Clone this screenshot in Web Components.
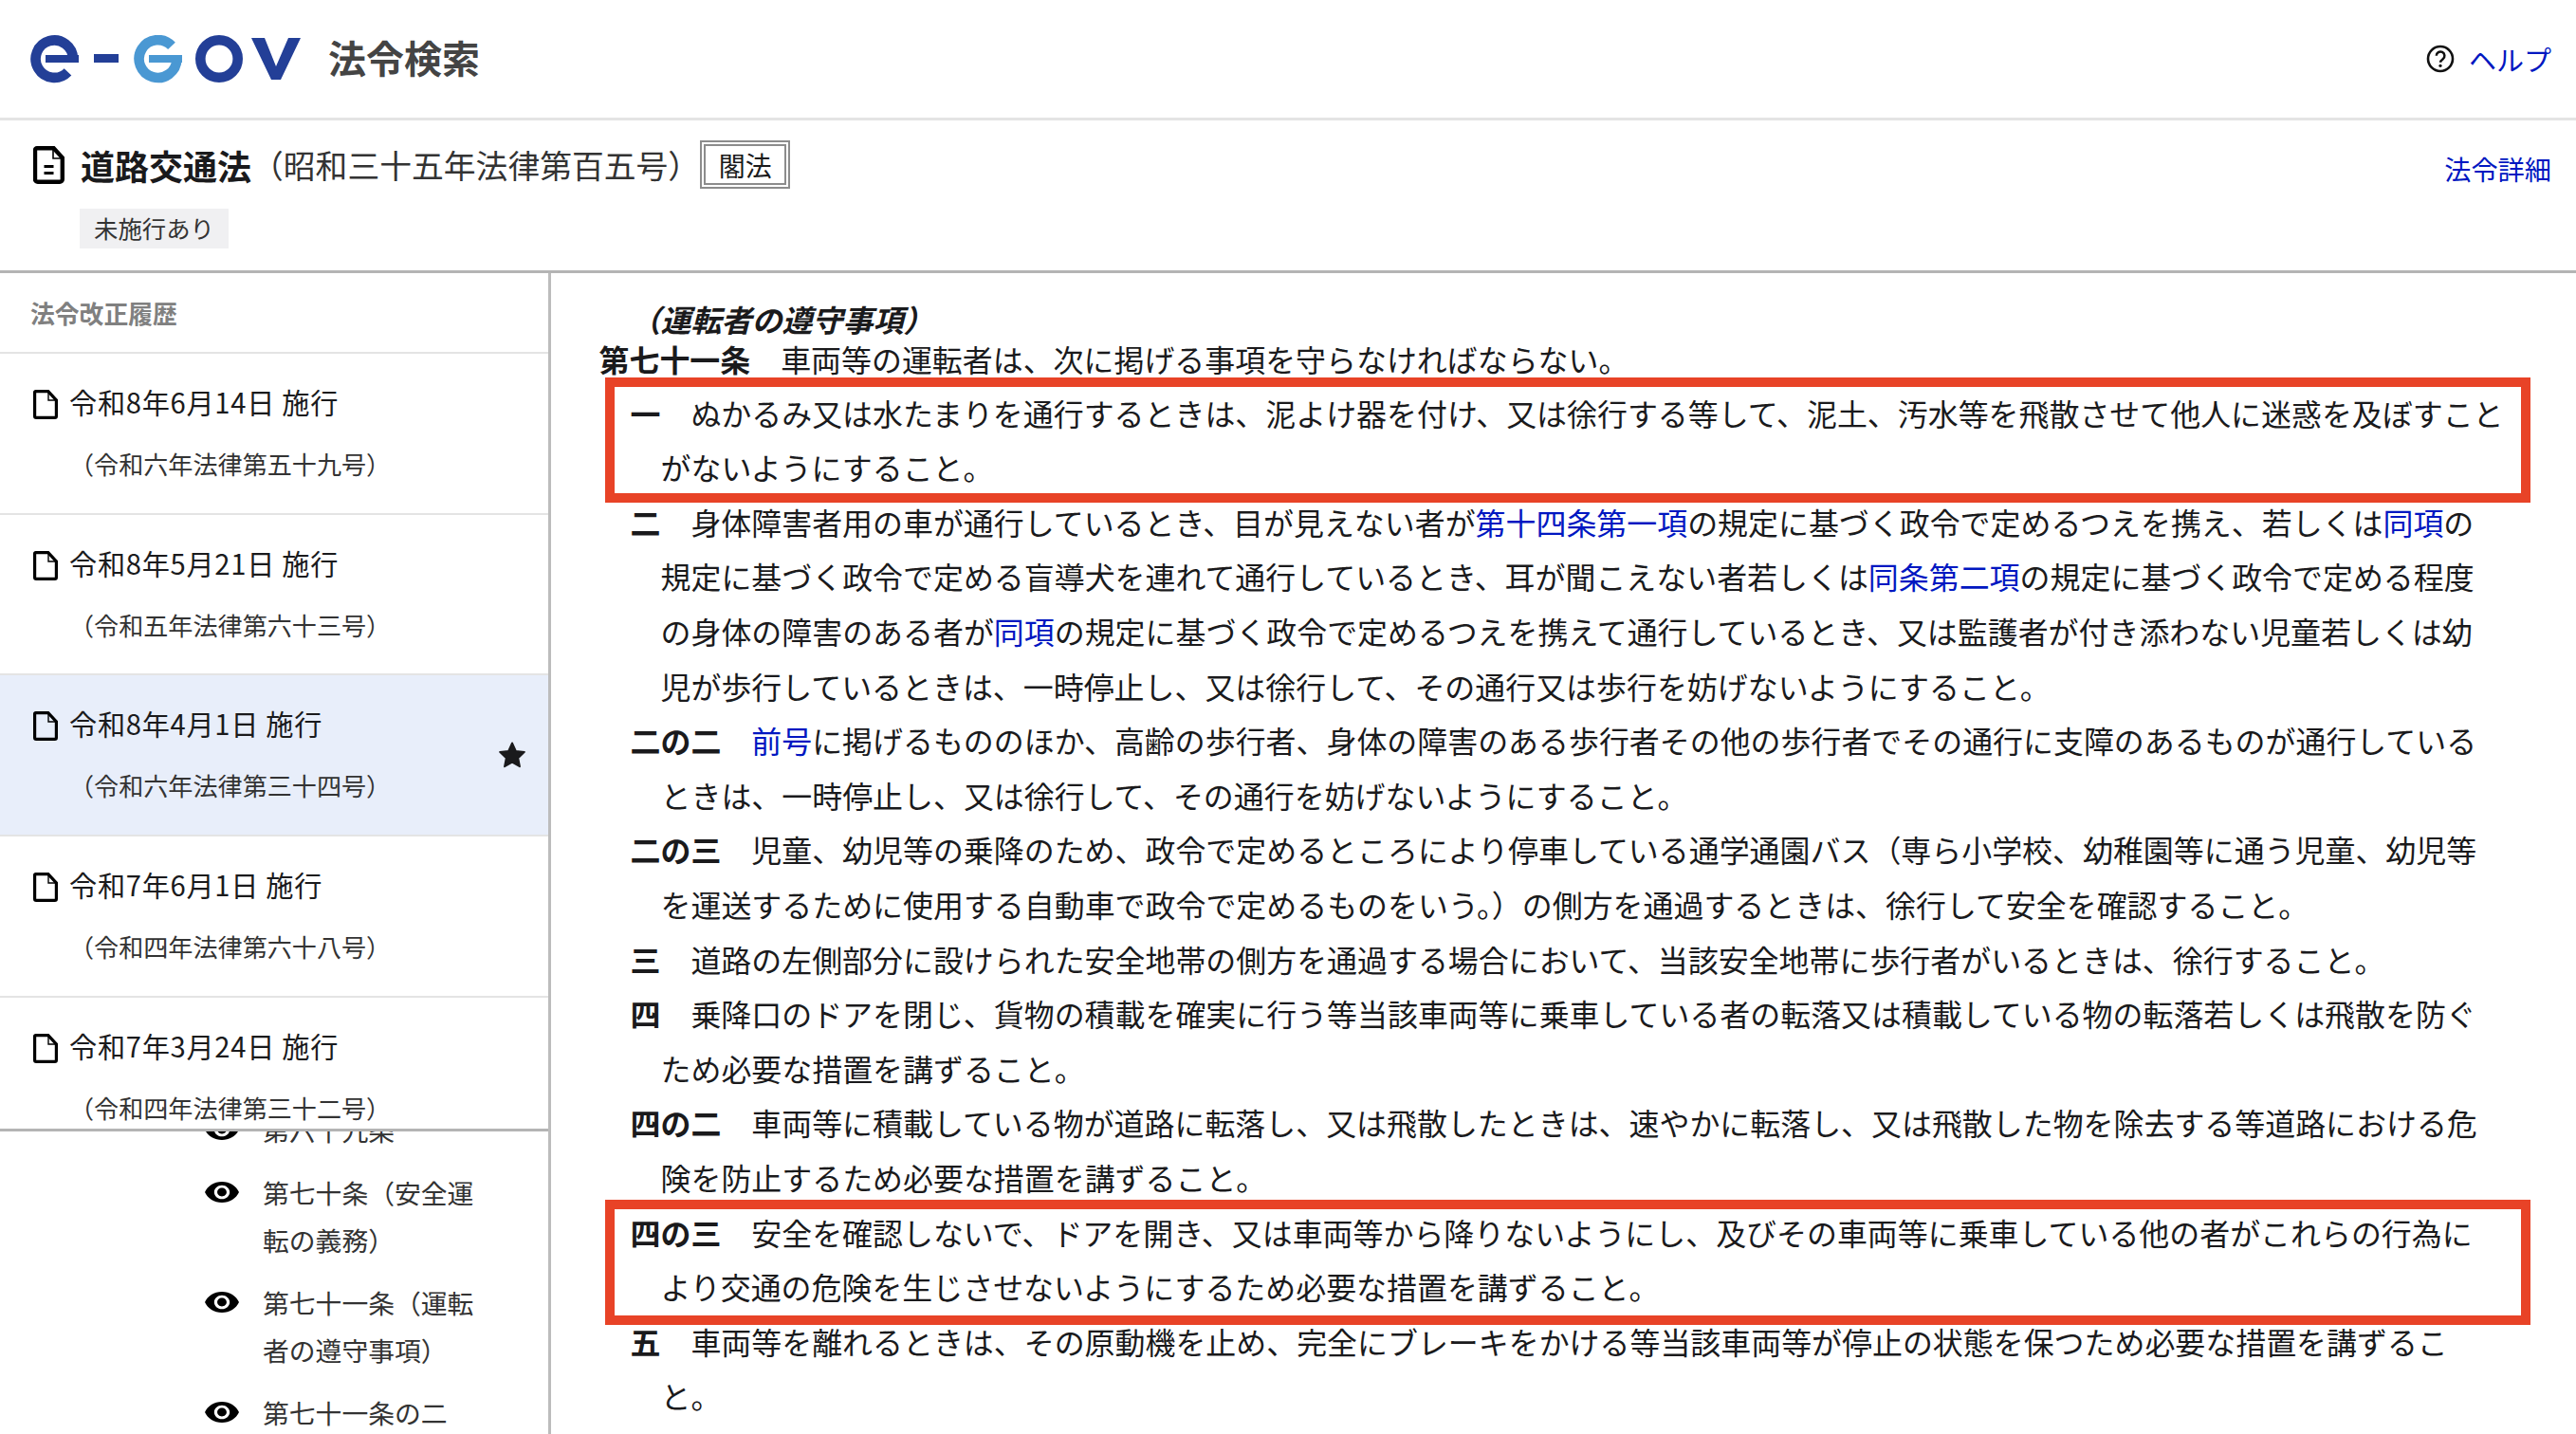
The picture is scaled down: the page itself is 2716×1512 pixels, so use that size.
<!DOCTYPE html>
<html lang="ja">
<head>
<meta charset="utf-8">
<title>道路交通法</title>
<style>
    html, body { margin: 0; height: 100%; overflow: hidden; background: #fff; }
    body { font-family: "Noto Sans CJK JP", "Noto Sans", sans-serif; color: #1a1a1c; }
</style>
</head>
<body>
<law-app>
    <site-header slot="header"></site-header>
    <law-bar slot="bar"></law-bar>
    <law-sidebar slot="side">
        <history-item slot="history">令和8年6月14日 施行<span slot="sub">（令和六年法律第五十九号）</span></history-item>
        <history-item slot="history">令和8年5月21日 施行<span slot="sub">（令和五年法律第六十三号）</span></history-item>
        <history-item slot="history" current>令和8年4月1日 施行<span slot="sub">（令和六年法律第三十四号）</span></history-item>
        <history-item slot="history">令和7年6月1日 施行<span slot="sub">（令和四年法律第六十八号）</span></history-item>
        <history-item slot="history">令和7年3月24日 施行<span slot="sub">（令和四年法律第三十二号）</span></history-item>
        <toc-item slot="toc">第六十九条</toc-item>
        <toc-item slot="toc">第七十条（安全運転の義務）</toc-item>
        <toc-item slot="toc">第七十一条（運転者の遵守事項）</toc-item>
        <toc-item slot="toc">第七十一条の二</toc-item>
    </law-sidebar>
    <law-article slot="main" caption="（運転者の遵守事項）" name="第七十一条">
        <span slot="lead">車両等の運転者は、次に掲げる事項を守らなければならない。</span>
        <law-item label="一" marked style="--mark-top:-8.6px;--mark-bottom:-8.2px">ぬかるみ又は水たまりを通行するときは、泥よけ器を付け、又は徐行する等して、泥土、汚水等を飛散させて他人に迷惑を及ぼすこと<br>がないようにすること。</law-item>
        <law-item label="二">身体障害者用の車が通行しているとき、目が見えない者が<law-ref>第十四条第一項</law-ref>の規定に基づく政令で定めるつえを携え、若しくは<law-ref>同項</law-ref>の<br>規定に基づく政令で定める盲導犬を連れて通行しているとき、耳が聞こえない者若しくは<law-ref>同条第二項</law-ref>の規定に基づく政令で定める程度<br>の身体の障害のある者が<law-ref>同項</law-ref>の規定に基づく政令で定めるつえを携えて通行しているとき、又は監護者が付き添わない児童若しくは幼<br>児が歩行しているときは、一時停止し、又は徐行して、その通行又は歩行を妨げないようにすること。</law-item>
        <law-item label="二の二"><law-ref>前号</law-ref>に掲げるもののほか、高齢の歩行者、身体の障害のある歩行者その他の歩行者でその通行に支障のあるものが通行している<br>ときは、一時停止し、又は徐行して、その通行を妨げないようにすること。</law-item>
        <law-item label="二の三">児童、幼児等の乗降のため、政令で定めるところにより停車している通学通園バス（専ら小学校、幼稚園等に通う児童、幼児等<br>を運送するために使用する自動車で政令で定めるものをいう。）の側方を通過するときは、徐行して安全を確認すること。</law-item>
        <law-item label="三">道路の左側部分に設けられた安全地帯の側方を通過する場合において、当該安全地帯に歩行者がいるときは、徐行すること。</law-item>
        <law-item label="四">乗降口のドアを閉じ、貨物の積載を確実に行う等当該車両等に乗車している者の転落又は積載している物の転落若しくは飛散を防ぐ<br>ため必要な措置を講ずること。</law-item>
        <law-item label="四の二">車両等に積載している物が道路に転落し、又は飛散したときは、速やかに転落し、又は飛散した物を除去する等道路における危<br>険を防止するため必要な措置を講ずること。</law-item>
        <law-item label="四の三" marked style="--mark-top:-5.6px;--mark-bottom:-11px">安全を確認しないで、ドアを開き、又は車両等から降りないようにし、及びその車両等に乗車している他の者がこれらの行為に<br>より交通の危険を生じさせないようにするため必要な措置を講ずること。</law-item>
        <law-item label="五">車両等を離れるときは、その原動機を止め、完全にブレーキをかける等当該車両等が停止の状態を保つため必要な措置を講ずるこ<br>と。</law-item>
    </law-article>
</law-app>

<script>
    class LawApp extends HTMLElement {
        constructor() {
            super();
            this.attachShadow({ mode: 'open' }).innerHTML = `
                <style>
                    :host { display: flex; flex-direction: column; height: 1512px; overflow: hidden; }
                    .main { flex: 1; min-height: 0; display: flex; }
                </style>
                <slot name="header"></slot>
                <slot name="bar"></slot>
                <div class="main">
                    <slot name="side"></slot>
                    <slot name="main"></slot>
                </div>
            `;
        }
    }

    class SiteHeader extends HTMLElement {
        constructor() {
            super();
            this.attachShadow({ mode: 'open' }).innerHTML = `
                <style>
                    :host {
                        display: flex;
                        align-items: center;
                        height: 124px;
                        padding: 0 26px 0 32px;
                        border-bottom: 3px solid #e4e4e4;
                    }
                    .logo { display: block; width: 285px; height: 51px; }
                    .name { margin-left: 29px; font-size: 40px; font-weight: 700; color: #444; line-height: 1; position: relative; top: -2px; }
                    .help { margin-left: auto; display: flex; align-items: center; gap: 15px; color: #0017c1; font-size: 29px; line-height: 1; }
                    .help svg { display: block; width: 30px; height: 30px; }
                </style>
                <svg class="logo" viewBox="32 35 285 51">
                    <g fill="none" stroke-width="10.6">
                        <path stroke="#233f97" d="M77 60A19.7 19.7 0 1 0 71.5 73.8"/>
                        <path stroke="#4a98d3" d="M181 46.4A19.9 19.9 0 1 0 186.4 60.5"/>
                        <circle stroke="#233f97" cx="231" cy="60" r="19.7"/>
                    </g>
                    <path fill="#233f97" d="M48 56h35v8H48zM99 55h26v9H99zM265 38h14l12 30 13-30h13l-21 44h-10z"/>
                    <path fill="#4a98d3" d="M157 56h35v8h-35z"/>
                </svg>
                <span class="name">法令検索</span>
                <div class="help">
                    <svg viewBox="0 0 30 30" fill="none" stroke="#111">
                        <circle cx="15" cy="15" r="13" stroke-width="2.6"/>
                        <path d="M10.8 11.8a4.3 4.3 0 1 1 6.9 3.4c-1.6 1.2-2.6 2-2.6 3.6" stroke-width="2.5"/>
                        <circle cx="15" cy="22.3" r="1.6" fill="#111" stroke="none"/>
                    </svg>
                    <span>ヘルプ</span>
                </div>
            `;
        }
    }

    class LawBar extends HTMLElement {
        constructor() {
            super();
            this.attachShadow({ mode: 'open' }).innerHTML = `
                <style>
                    :host {
                        display: flex;
                        justify-content: space-between;
                        align-items: flex-start;
                        box-sizing: border-box;
                        height: 161px;
                        padding: 21px 26px 0 35px;
                        border-bottom: 3px solid #b4b4b4;
                    }
                    .row { display: flex; align-items: center; height: 51px; }
                    .row svg { display: block; width: 33px; height: 40px; margin-right: 17px; }
                    h1 { margin: 0; font-size: 36px; font-weight: 700; line-height: 1; }
                    .num { font-size: 33.8px; color: #333; line-height: 1; }
                    .kind {
                        box-sizing: border-box;
                        width: 95px;
                        height: 51px;
                        border: 6px double #8c8c8c;
                        font-size: 28px;
                        display: flex;
                        align-items: center;
                        justify-content: center;
                    }
                    .tag {
                        display: inline-block;
                        margin: 21px 0 0 49px;
                        padding: 0 15px;
                        height: 42px;
                        line-height: 40px;
                        font-size: 25.4px;
                        background: #f0f0f2;
                        color: #333;
                    }
                    .detail { margin-top: 12px; color: #0017c1; font-size: 28.2px; line-height: 36px; }
                </style>
                <div>
                    <div class="row">
                        <svg viewBox="0 0 33 40" fill="none" stroke="#000">
                            <path d="M4 2.2h17.6L30.8 12.4V35a2.8 2.8 0 0 1-2.8 2.8H4.8A2.8 2.8 0 0 1 2 35V4.2a2 2 0 0 1 2-2z" stroke-width="4.4"/>
                            <path d="M21 3v10h9" stroke-width="1.6"/>
                            <path d="M11.5 21.5h10M11.5 28.5h10" stroke-width="3"/>
                        </svg>
                        <h1>道路交通法</h1>
                        <span class="num">（昭和三十五年法律第百五号）</span>
                        <span class="kind">閣法</span>
                    </div>
                    <span class="tag">未施行あり</span>
                </div>
                <div class="detail">法令詳細</div>
            `;
        }
    }

    class LawSidebar extends HTMLElement {
        constructor() {
            super();
            this.attachShadow({ mode: 'open' }).innerHTML = `
                <style>
                    :host {
                        display: flex;
                        flex-direction: column;
                        flex: none;
                        box-sizing: border-box;
                        width: 581px;
                        height: 100%;
                        border-right: 3px solid #bcbcbc;
                        overflow: hidden;
                    }
                    .top { flex: none; height: 905px; box-sizing: border-box; border-bottom: 3px solid #b4b4b4; overflow: hidden; }
                    h2 {
                        margin: 0;
                        box-sizing: border-box;
                        height: 85px;
                        padding: 24px 0 0 32px;
                        border-bottom: 2px solid #e4e4e4;
                        font-size: 25.8px;
                        line-height: 36px;
                        font-weight: 700;
                        color: #808080;
                    }
                    .toc { flex: 1; min-height: 0; overflow: hidden; }
                    .inner { display: flex; flex-direction: column; gap: 16px; margin-top: -27px; padding-left: 216px; }
                </style>
                <div class="top">
                    <h2>法令改正履歴</h2>
                    <slot name="history"></slot>
                </div>
                <div class="toc"><div class="inner"><slot name="toc"></slot></div></div>
            `;
        }
    }

    class HistoryItem extends HTMLElement {
        constructor() {
            super();
            this.attachShadow({ mode: 'open' });
        }

        connectedCallback() {
            const star = this.hasAttribute('current')
                ? `<svg class="star" viewBox="0 0 24 24"><path fill="#1a1a1c" stroke="#1a1a1c" stroke-width="1.4" stroke-linejoin="round" d="M12 2.6l2.9 6.3 6.8.8-5 4.7 1.3 6.8-6-3.4-6 3.4 1.3-6.8-5-4.7 6.8-.8z"/></svg>`
                : '';
            this.shadowRoot.innerHTML = `
                <style>
                    :host {
                        display: flex;
                        align-items: center;
                        box-sizing: border-box;
                        height: 169.7px;
                        padding: 0 22px 0 35px;
                        border-bottom: 2px solid #e4e4e4;
                    }
                    :host([current]) { background: #e8eefa; }
                    .body { display: flex; gap: 12px; align-self: flex-start; padding-top: 33px; }
                    .doc { display: block; flex: none; width: 26px; height: 31px; margin-top: 5px; }
                    .date { font-size: 29.2px; line-height: 34px; letter-spacing: .7px; }
                    .sub { margin-top: 32px; font-size: 26.1px; line-height: 34px; color: #333; }
                    .star { display: block; margin-left: auto; width: 32px; height: 32px; flex: none; }
                </style>
                <div class="body">
                    <svg class="doc" viewBox="0 0 26 31" fill="none" stroke="#000" stroke-width="3.2">
                        <path d="M2.6 1.6h13.2l8.6 9.2v17a1.6 1.6 0 0 1-1.6 1.6H3.2a1.6 1.6 0 0 1-1.6-1.6V2.6a1 1 0 0 1 1-1z"/>
                        <path d="M16 2v9h8" stroke-width="1.4"/>
                    </svg>
                    <div>
                        <div class="date"><slot></slot></div>
                        <div class="sub"><slot name="sub"></slot></div>
                    </div>
                </div>
                ${star}
            `;
        }
    }

    class TocItem extends HTMLElement {
        constructor() {
            super();
            this.attachShadow({ mode: 'open' }).innerHTML = `
                <style>
                    :host { display: flex; gap: 25px; font-size: 27.8px; line-height: 50px; color: #333; }
                    svg { display: block; flex: none; width: 36px; height: 22px; margin-top: 14px; }
                    .text { width: 226px; }
                </style>
                <svg viewBox="1 4.5 22 15" preserveAspectRatio="none">
                    <path fill="#000" d="M12 4.5C7 4.5 2.73 7.61 1 12c1.73 4.39 6 7.5 11 7.5s9.27-3.11 11-7.5c-1.73-4.39-6-7.5-11-7.5zM12 17c-2.76 0-5-2.24-5-5s2.24-5 5-5 5 2.24 5 5-2.24 5-5 5zm0-8c-1.66 0-3 1.34-3 3s1.34 3 3 3 3-1.34 3-3-1.34-3-3-3z"/>
                </svg>
                <div class="text"><slot></slot></div>
            `;
        }
    }

    class LawArticle extends HTMLElement {
        constructor() {
            super();
            this.attachShadow({ mode: 'open' });
        }

        connectedCallback() {
            this.shadowRoot.innerHTML = `
                <style>
                    :host {
                        display: block;
                        flex: 1;
                        min-width: 0;
                        padding: 30px 48px 0 50.5px;
                        font-size: 31.95px;
                        white-space: nowrap;
                    }
                    .caption { margin: 0 0 6px 33px; font-size: 32px; line-height: 36px; font-weight: 700; font-style: italic; }
                    .lead { margin-bottom: 10.6px; line-height: 36px; }
                    b { font-weight: 700; }
                </style>
                <div class="caption">${this.getAttribute('caption')}</div>
                <div class="lead"><b>${this.getAttribute('name')}</b>　<slot name="lead"></slot></div>
                <slot></slot>
            `;
        }
    }

    class LawItem extends HTMLElement {
        constructor() {
            super();
            this.attachShadow({ mode: 'open' });
        }

        connectedCallback() {
            this.shadowRoot.innerHTML = `
                <style>
                    :host {
                        display: block;
                        position: relative;
                        padding-left: 65px;
                        text-indent: -32px;
                        line-height: 57.6px;
                    }
                    :host([marked])::after {
                        content: "";
                        position: absolute;
                        left: 6px;
                        right: 0;
                        top: var(--mark-top);
                        bottom: var(--mark-bottom);
                        border: 10px solid #e84327;
                        pointer-events: none;
                    }
                    b { font-weight: 700; }
                </style>
                <b>${this.getAttribute('label')}</b>　<slot></slot>
            `;
        }
    }

    class LawRef extends HTMLElement {
        constructor() {
            super();
            this.attachShadow({ mode: 'open' }).innerHTML = `<style>:host { display: inline; color: #0017c1; }</style><slot></slot>`;
        }
    }

    customElements.define('law-app', LawApp);
    customElements.define('site-header', SiteHeader);
    customElements.define('law-bar', LawBar);
    customElements.define('law-sidebar', LawSidebar);
    customElements.define('history-item', HistoryItem);
    customElements.define('toc-item', TocItem);
    customElements.define('law-article', LawArticle);
    customElements.define('law-item', LawItem);
    customElements.define('law-ref', LawRef);
</script>
</body>
</html>
